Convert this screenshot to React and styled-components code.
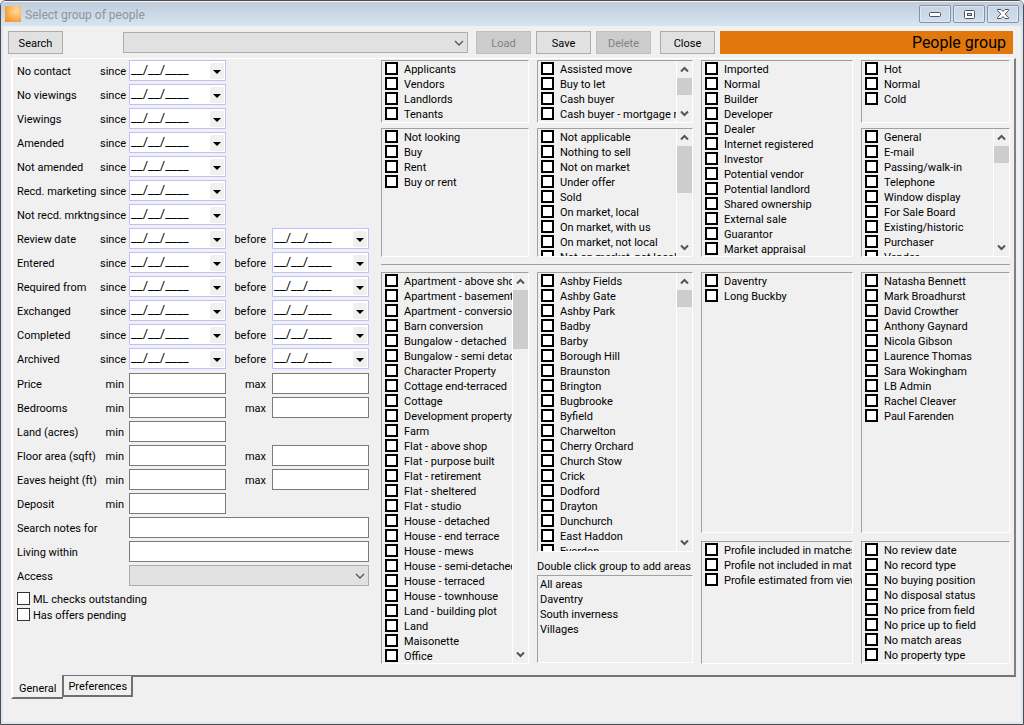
import React, { useId } from "react";
import styled, { createGlobalStyle, css } from "styled-components";

const GlobalStyle = createGlobalStyle`
  * {
    box-sizing: border-box;
  }
  body {
    margin: 0;
    background: #f0f0f0;
  }
  body, button, input, select {
    font-family: Roboto, "Liberation Sans", Arial, sans-serif;
    font-size: 11px;
    color: #000;
  }
`;

const Window = styled.div`
  display: flex;
  flex-direction: column;
  min-height: 100vh;
  background: #f0f0f0;
  border: 1px solid #4b4b50;
  border-radius: 6px 6px 0 0;
  box-shadow: inset 0 0 0 2px #dce6f1;
`;

const TitleBar = styled.header`
  display: flex;
  align-items: center;
  height: 25px;
  padding: 0 4px;
  border-top: 1px solid #f4f7fa;
  border-radius: 5px 5px 0 0;
  background: linear-gradient(#bfccda, #d7e4f1);
`;

const AppIcon = styled.span`
  width: 16px;
  height: 16px;
  background: radial-gradient(circle at 70% 30%, #ffdc9a, #f9a848 60%, #ef8426);
`;

const Title = styled.h1`
  flex: 1;
  margin: 0 0 0 4px;
  padding-top: 2px;
  font-size: 12px;
  font-weight: normal;
  line-height: 16px;
  color: #8e959c;
`;

const WindowButtons = styled.div`
  display: flex;
  gap: 2px;
`;

const WindowButton = styled.button`
  display: flex;
  align-items: center;
  justify-content: center;
  width: 32px;
  height: 18px;
  padding: 0;
  border: 1px solid #8494a8;
  border-radius: 2px;
  background: linear-gradient(#c6d3e1, #d3dfec);
  box-shadow: inset 0 0 0 1px #dfe8f2;
`;

const Toolbar = styled.div`
  display: flex;
  align-items: center;
  padding: 5px 10px 4px 7px;
`;

const Button = styled.button`
  flex: none;
  width: 55px;
  height: 23px;
  margin-left: ${(p) => p.$gap || 0}px;
  padding: 1px 0 0;
  border: 1px solid #adadad;
  background: #e1e1e1;

  &:disabled {
    border-color: #bfbfbf;
    background: #cccccc;
    color: #838383;
  }
`;

const SelectBox = styled.div`
  display: grid;
  align-items: center;
  min-width: 0;
  flex: 345;
  margin-left: ${(p) => p.$gap || 0}px;

  > * {
    grid-area: 1 / 1;
  }
  svg {
    justify-self: end;
    margin-right: 4px;
    pointer-events: none;
  }
`;

const Select = styled.select`
  appearance: none;
  width: 100%;
  height: 21px;
  border: 1px solid #adadad;
  border-radius: 0;
  background: #e1e1e1;
`;

const Banner = styled.div`
  flex: 286;
  height: 23px;
  margin-left: 5px;
  padding-right: 7px;
  background: #e2780c;
  font-size: 16px;
  line-height: 23px;
  text-align: right;
`;

const Panel = styled.main`
  display: flex;
  gap: 12px;
  margin: 0 7px 0 10px;
  padding: 1px 4px 11px 4px;
  border: solid;
  border-width: 1px 2px 2px;
  border-color: #fff #808080 #757575 #fff;
`;

const Form = styled.form`
  flex: none;
  width: 352px;
`;

const Row = styled.div`
  display: grid;
  grid-template-columns: 80px 26px 97px 40px 97px;
  column-gap: 3px;
  align-items: center;
  height: 24px;
  padding-bottom: 3px;
  white-space: nowrap;

  > span, > label {
    padding-top: 2px;
  }
  .wide {
    grid-column: 3 / 6;
  }
`;

const Plain = styled.div`
  padding-top: 1px;
`;

const Prefix = styled.span`
  text-align: right;
  padding-right: ${(p) => p.$pad || 0}px;
`;

const TextInput = styled.input`
  width: 100%;
  min-width: 0;
  height: 21px;
  border: 1px solid #7a7a7a;
  background: #fff;
`;

const DateBox = styled.div`
  display: flex;
  align-items: center;
  height: 21px;
  padding-right: 1px;
  border: 1px solid #c0c0ff;
  background: #fff;
`;

const DateInput = styled.input`
  flex: 1;
  min-width: 0;
  height: 17px;
  padding: 0 0 2px 1px;
  border: 0;
  font-size: 13px;
`;

const DateButton = styled.button`
  display: flex;
  align-items: center;
  justify-content: center;
  width: 14px;
  height: 16px;
  padding: 2px 0 0;
  border: 0;
  border-radius: 2px;
  background: #f0f0f0;
`;

const Checks = styled.div`
  padding-top: 3px;
`;

const Check = styled.label`
  display: flex;
  align-items: flex-start;
  gap: ${(p) => (p.$thin ? 3 : 6)}px;
  height: ${(p) => (p.$thin ? 16 : 15)}px;
  line-height: 15px;
  white-space: nowrap;
`;

const Tick = styled.input`
  appearance: none;
  flex: none;
  width: 13px;
  height: 13px;
  margin: 0;
  border: ${(p) => (p.$thin ? 1 : 2)}px solid ${(p) => (p.$thin ? "#333" : "#000")};
  background: #fff;

  &:checked {
    background: #000;
    box-shadow: inset 0 0 0 2px #fff;
  }
`;

const Lists = styled.div`
  flex: 1;
  min-width: 0;
`;

const columns = css`
  display: grid;
  grid-template-columns: minmax(0, 148fr) minmax(0, 156fr) minmax(0, 152fr) minmax(0, 149fr);
  column-gap: 8px;
`;

const TopLists = styled.div`
  ${columns}
  grid-template-rows: 63px 129px;
  row-gap: 5px;

  .tall {
    grid-row: 1 / 3;
    grid-column: 3;
  }
`;

const Divider = styled.hr`
  margin: 7px 0;
  border: 0;
  border-top: 1px solid #a0a0a0;
`;

const BottomLists = styled.div`
  ${columns}
  height: 392px;
`;

const Stack = styled.div`
  display: flex;
  flex-direction: column;
  gap: 8px;
  min-height: 0;
`;

const ListFrame = styled.div`
  display: flex;
  flex: ${(p) => (p.$height ? "none" : 1)};
  height: ${(p) => (p.$height ? p.$height + "px" : "auto")};
  min-height: 0;
  border: 1px solid;
  border-color: #a0a0a0 #fff #fff #a0a0a0;
  overflow: hidden;
`;

const Items = styled.div`
  flex: 1;
  min-width: 0;
  padding: 1px 0 0 3px;
  overflow: hidden;
`;

const ScrollBar = styled.div`
  display: flex;
  flex-direction: column;
  flex: none;
  width: 16px;
  border-left: 1px solid #fff;
`;

const Arrow = styled.button`
  display: flex;
  align-items: center;
  justify-content: center;
  height: 17px;
  padding: 0;
  border: 0;
  background: none;

  &:last-child {
    margin-top: auto;
  }
`;

const Thumb = styled.div`
  height: ${(p) => p.$size}px;
  background: #cdcdcd;
`;

const AreaGroup = styled.section`
  padding-bottom: 1px;

  h2 {
    margin: 0;
    padding-bottom: 2px;
    font-size: 11px;
    font-weight: normal;
    line-height: 13px;
    white-space: nowrap;
  }
  ul {
    height: 88px;
    margin: 0;
    padding: 1px 2px;
    list-style: none;
    line-height: 15px;
    border: 1px solid;
    border-color: #a0a0a0 #fff #fff #a0a0a0;
  }
`;

const Tabs = styled.nav`
  display: flex;
  align-items: flex-start;
  margin-left: 10px;
`;

const Tab = styled.button`
  height: ${(p) => (p.$active ? 24 : 21)}px;
  margin-top: ${(p) => (p.$active ? -2 : -1)}px;
  padding: ${(p) => (p.$active ? "4px 6px 0" : "2px 4px 0")};
  border: solid #707070;
  border-width: ${(p) => (p.$active ? "0 1px 2px 2px" : "0 2px 2px 1px")};
  border-left-color: ${(p) => (p.$active ? "#fff" : "#707070")};
  background: #f0f0f0;
`;

const Chevron = () => (
  <svg width="10" height="6" viewBox="0 0 10 6" aria-hidden="true">
    <path d="M1 1l4 4 4-4" fill="none" stroke="#555" strokeWidth="1.3" />
  </svg>
);

const ScrollChevron = ({ up }) => (
  <svg width="9" height="7" viewBox="0 0 9 7" aria-hidden="true">
    <path d={up ? "M1 5.5l3.5-3.5 3.5 3.5" : "M1 1.5l3.5 3.5 3.5-3.5"} fill="none" stroke="#555" strokeWidth="2" />
  </svg>
);

const DateField = ({ label }) => (
  <DateBox>
    <DateInput aria-label={label} defaultValue="__/__/____" />
    <DateButton type="button" aria-label={`Pick ${label}`}>
      <svg width="8" height="4" viewBox="0 0 8 4">
        <path d="M0 0h8L4 4z" />
      </svg>
    </DateButton>
  </DateBox>
);

const Option = ({ label, thin }) => (
  <Check $thin={thin}>
    <Tick type="checkbox" $thin={thin} />
    {label}
  </Check>
);

const CheckList = ({ items, thumb, height, className }) => (
  <ListFrame className={className} $height={height}>
    <Items>
      {items.map((item) => (
        <Option key={item} label={item} />
      ))}
    </Items>
    {thumb && (
      <ScrollBar>
        <Arrow type="button" aria-label="Scroll up">
          <ScrollChevron up />
        </Arrow>
        <Thumb $size={thumb} />
        <Arrow type="button" aria-label="Scroll down">
          <ScrollChevron />
        </Arrow>
      </ScrollBar>
    )}
  </ListFrame>
);

const WideField = ({ label }) => {
  const id = useId();
  return (
    <Row>
      <label htmlFor={id}>{label}</label>
      <TextInput id={id} className="wide" />
    </Row>
  );
};

const dateRows = [
  ["No contact"],
  ["No viewings"],
  ["Viewings"],
  ["Amended"],
  ["Not amended"],
  ["Recd. marketing"],
  ["Not recd. mrktng"],
  ["Review date", true],
  ["Entered", true],
  ["Required from", true],
  ["Exchanged", true],
  ["Completed", true],
  ["Archived", true],
];

const rangeRows = [
  ["Price", true],
  ["Bedrooms", true],
  ["Land (acres)"],
  ["Floor area (sqft)", true],
  ["Eaves height (ft)", true],
  ["Deposit"],
];

const contactTypes = ["Applicants", "Vendors", "Landlords", "Tenants"];
const buyingPositions = ["Assisted move", "Buy to let", "Cash buyer", "Cash buyer - mortgage required"];
const categories = [
  "Imported", "Normal", "Builder", "Developer", "Dealer", "Internet registered", "Investor",
  "Potential vendor", "Potential landlord", "Shared ownership", "External sale", "Guarantor",
  "Market appraisal",
];
const ratings = ["Hot", "Normal", "Cold"];
const intentions = ["Not looking", "Buy", "Rent", "Buy or rent"];
const disposals = [
  "Not applicable", "Nothing to sell", "Not on market", "Under offer", "Sold", "On market, local",
  "On market, with us", "On market, not local", "Not on market, not local",
];
const sources = [
  "General", "E-mail", "Passing/walk-in", "Telephone", "Window display", "For Sale Board",
  "Existing/historic", "Purchaser", "Vendor",
];
const propertyTypes = [
  "Apartment - above shop", "Apartment - basement", "Apartment - conversion", "Barn conversion",
  "Bungalow - detached", "Bungalow - semi detached", "Character Property", "Cottage end-terraced",
  "Cottage", "Development property", "Farm", "Flat - above shop", "Flat - purpose built",
  "Flat - retirement", "Flat - sheltered", "Flat - studio", "House - detached",
  "House - end terrace", "House - mews", "House - semi-detached", "House - terraced",
  "House - townhouse", "Land - building plot", "Land", "Maisonette", "Office",
];
const areas = [
  "Ashby Fields", "Ashby Gate", "Ashby Park", "Badby", "Barby", "Borough Hill", "Braunston",
  "Brington", "Bugbrooke", "Byfield", "Charwelton", "Cherry Orchard", "Church Stow", "Crick",
  "Dodford", "Drayton", "Dunchurch", "East Haddon", "Everdon",
];
const areaGroups = ["All areas", "Daventry", "South inverness", "Villages"];
const offices = ["Daventry", "Long Buckby"];
const profiles = [
  "Profile included in matches",
  "Profile not included in matches",
  "Profile estimated from viewings",
];
const staff = [
  "Natasha Bennett", "Mark Broadhurst", "David Crowther", "Anthony Gaynard", "Nicola Gibson",
  "Laurence Thomas", "Sara Wokingham", "LB Admin", "Rachel Cleaver", "Paul Farenden",
];
const missing = [
  "No review date", "No record type", "No buying position", "No disposal status",
  "No price from field", "No price up to field", "No match areas", "No property type",
];

const App = () => {
  return (
    <>
      <GlobalStyle />
      <Window>
        <TitleBar>
          <AppIcon />
          <Title>Select group of people</Title>
          <WindowButtons>
            <WindowButton aria-label="Minimize">
              <svg width="12" height="5" viewBox="0 0 12 5">
                <rect x=".5" y=".5" width="11" height="4" rx="1" fill="#fff" stroke="#50535c" />
              </svg>
            </WindowButton>
            <WindowButton aria-label="Maximize">
              <svg width="11" height="9" viewBox="0 0 11 9">
                <rect x=".5" y=".5" width="10" height="8" rx="1" fill="#fff" stroke="#50535c" />
                <rect x="3.5" y="3.5" width="4" height="2" fill="#c6d3e1" stroke="#50535c" />
              </svg>
            </WindowButton>
            <WindowButton aria-label="Close window">
              <svg width="12" height="10" viewBox="0 0 12 10">
                <path
                  d="M.5.5H4l2 2 2-2h3.5v1L8.2 5l3.3 3.5v1H8l-2-2-2 2H.5v-1L3.8 5 .5 1.5z"
                  fill="#fff"
                  stroke="#50535c"
                />
              </svg>
            </WindowButton>
          </WindowButtons>
        </TitleBar>

        <Toolbar>
          <Button>Search</Button>
          <SelectBox $gap={60}>
            <Select aria-label="Saved group" />
            <Chevron />
          </SelectBox>
          <Button $gap={8} disabled>Load</Button>
          <Button $gap={5}>Save</Button>
          <Button $gap={5} disabled>Delete</Button>
          <Button $gap={9}>Close</Button>
          <Banner>People group</Banner>
        </Toolbar>

        <Panel>
          <Form>
            {dateRows.map(([label, before]) => (
              <Row key={label}>
                <span>{label}</span>
                <Prefix>since</Prefix>
                <DateField label={`${label} since`} />
                {before && (
                  <>
                    <Prefix $pad={3}>before</Prefix>
                    <DateField label={`${label} before`} />
                  </>
                )}
              </Row>
            ))}
            <Plain>
              {rangeRows.map(([label, max]) => (
                <Row key={label}>
                  <span>{label}</span>
                  <Prefix $pad={2}>min</Prefix>
                  <TextInput aria-label={`${label} min`} />
                  {max && (
                    <>
                      <Prefix $pad={3}>max</Prefix>
                      <TextInput aria-label={`${label} max`} />
                    </>
                  )}
                </Row>
              ))}
              <WideField label="Search notes for" />
              <WideField label="Living within" />
              <Row>
                <label htmlFor="access">Access</label>
                <SelectBox className="wide">
                  <Select id="access" />
                  <Chevron />
                </SelectBox>
              </Row>
            </Plain>
            <Checks>
              <Option label="ML checks outstanding" thin />
              <Option label="Has offers pending" thin />
            </Checks>
          </Form>

          <Lists>
            <TopLists>
              <CheckList items={contactTypes} />
              <CheckList items={buyingPositions} thumb={17} />
              <CheckList items={categories} className="tall" />
              <CheckList items={ratings} />
              <CheckList items={intentions} />
              <CheckList items={disposals} thumb={47} />
              <CheckList items={sources} thumb={17} />
            </TopLists>
            <Divider />
            <BottomLists>
              <CheckList items={propertyTypes} thumb={59} />
              <Stack>
                <CheckList items={areas} thumb={17} />
                <AreaGroup>
                  <h2>Double click group to add areas</h2>
                  <ul>
                    {areaGroups.map((group) => (
                      <li key={group}>{group}</li>
                    ))}
                  </ul>
                </AreaGroup>
              </Stack>
              <Stack>
                <CheckList items={offices} />
                <CheckList items={profiles} height={123} />
              </Stack>
              <Stack>
                <CheckList items={staff} />
                <CheckList items={missing} height={123} />
              </Stack>
            </BottomLists>
          </Lists>
        </Panel>

        <Tabs>
          <Tab $active>General</Tab>
          <Tab>Preferences</Tab>
        </Tabs>
      </Window>
    </>
  );
};

export default App;
